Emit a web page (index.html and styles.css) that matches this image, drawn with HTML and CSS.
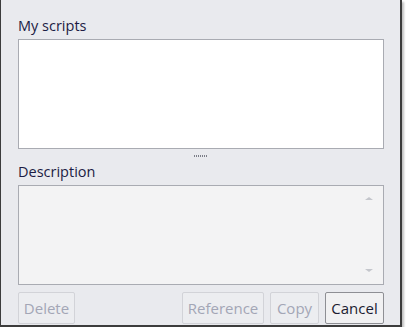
FILE: index.html
```html
<!DOCTYPE html>
<html lang="en">
<head>
  <meta charset="UTF-8" />
  <title>My scripts</title>
  <link rel="stylesheet" href="styles.css">
</head>
<body>
  <div class="dialog">
    <label class="field-label" for="scripts">My scripts</label>
    <div class="listbox" id="scripts"></div>

    <div class="grip"><span></span></div>

    <label class="field-label" for="description">Description</label>
    <div class="memo" id="description">
      <div class="scroll">
        <span class="arrow up"></span>
        <span class="arrow down"></span>
      </div>
    </div>

    <div class="buttons">
      <button class="btn-delete" disabled>Delete</button>
      <span class="spacer"></span>
      <button class="btn-reference" disabled>Reference</button>
      <button class="btn-copy" disabled>Copy</button>
      <button class="btn-cancel">Cancel</button>
    </div>
  </div>
</body>
</html>
```

FILE: styles.css
```css
html, body {
  margin: 0;
  background: #ffffff;
  font-family: 'Open Sans', 'Noto Sans', sans-serif;
}

.dialog {
  width: 402px;
  height: 327px;
  background: #e9eaee;
  border: 1px solid #3c3c3c;
  border-top: none;
  border-right-width: 2px;
  border-bottom-width: 2px;
  box-shadow: 2px 2px 2px rgba(0, 0, 0, 0.25);
  box-sizing: border-box;
  padding: 16px 16px 0 17px;
  display: flex;
  flex-direction: column;
}

.dialog > * {
  flex-shrink: 0;
}

.field-label {
  font-size: 14.5px;
  line-height: 20px;
  color: #1c1c44;
  margin-bottom: 3px;
}

.listbox {
  height: 108px;
  background: #ffffff;
  border: 1px solid #a9abb2;
}

.grip {
  height: 13px;
  display: flex;
  justify-content: center;
  align-items: center;
}

.grip span {
  width: 14px;
  height: 2px;
  background: repeating-linear-gradient(90deg, #7c7e88 0 1px, transparent 1px 2px);
}

.memo {
  height: 98px;
  background: #f3f3f4;
  border: 1px solid #a9abb2;
  display: flex;
  justify-content: flex-end;
}

.scroll {
  width: 16px;
  margin-right: 6px;
  display: flex;
  flex-direction: column;
  justify-content: space-between;
  align-items: center;
  padding: 11px 0 12px;
}

.arrow {
  width: 0;
  height: 0;
  border-left: 4px solid transparent;
  border-right: 4px solid transparent;
}

.arrow.up {
  border-bottom: 3px solid #c4c6cc;
}

.arrow.down {
  border-top: 3px solid #c4c6cc;
}

.buttons {
  display: flex;
  gap: 6px;
  margin-top: 7px;
}

.spacer {
  flex: 1;
}

.buttons button {
  height: 32px;
  padding: 0;
  font-family: inherit;
  font-size: 15px;
  border: 1px solid #d2d3d8;
  border-radius: 2px;
  background: #ecedf0;
  color: #a3a6b6;
}

.buttons .btn-delete { width: 57px; }
.buttons .btn-reference { width: 82px; }
.buttons .btn-copy { width: 49px; }
.buttons .btn-cancel { width: 59px; }

.buttons button.btn-cancel {
  border-color: #8e8f94;
  background: #f1f1f2;
  color: #1c1c30;
}
```
